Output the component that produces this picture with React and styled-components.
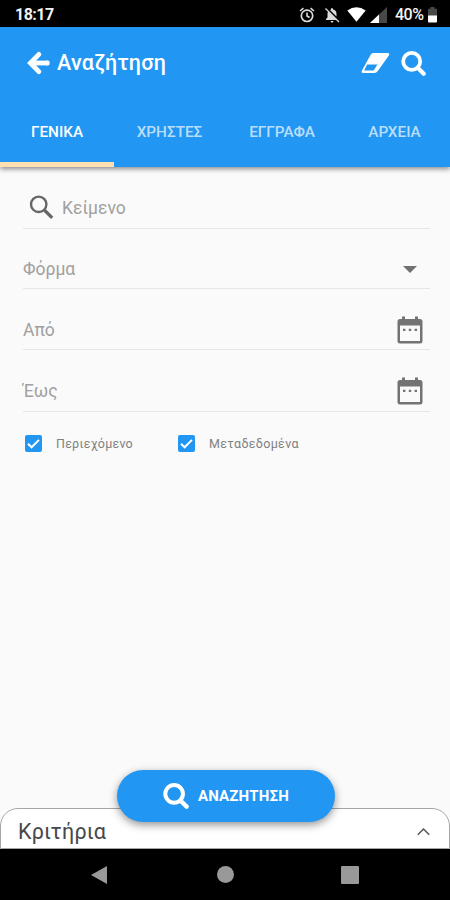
import React, { useState } from 'react';
import styled, { createGlobalStyle } from 'styled-components';

const GlobalStyle = createGlobalStyle`
    body {
        margin: 0;
        background: #fafafa;
        font-family: Roboto, 'Noto Sans', sans-serif;
        overflow: hidden;
    }

    * {
        box-sizing: border-box;
    }

    svg {
        display: block;
        flex: none;
    }
`;

const Screen = styled.div`
    width: 450px;
    height: 900px;
    display: flex;
    flex-direction: column;
    background: #fafafa;
    overflow: hidden;
`;

const StatusBar = styled.div`
    height: 27px;
    flex: none;
    padding: 2px 13px 0 15px;
    display: flex;
    align-items: center;
    justify-content: space-between;
    background: black;
    color: #f2f2f2;
    font-size: 16px;
    font-weight: 500;
`;

const StatusIcons = styled.div`
    display: flex;
    align-items: center;
`;

const StatusIcon = styled.svg`
    margin-right: ${(props) => props.$gap || 0}px;
`;

const Clock = styled.span`
    font-weight: 700;
    letter-spacing: -0.5px;
`;

const Battery = styled.span`
    width: 28px;
    margin-right: 5px;
    white-space: nowrap;
    letter-spacing: -0.5px;
`;

const Header = styled.header`
    height: 140px;
    flex: none;
    display: flex;
    flex-direction: column;
    background: #2196f3;
    color: white;
    box-shadow: 0 2px 5px rgba(0, 0, 0, 0.45);
`;

const Toolbar = styled.div`
    height: 72px;
    padding: 0 24px 0 26px;
    display: flex;
    align-items: center;
`;

const Title = styled.h1`
    flex: 1;
    margin: 0 0 0 7px;
    font-size: 21.5px;
    font-weight: 500;
    line-height: 30px;
    letter-spacing: 0.25px;
`;

const Actions = styled.div`
    display: flex;
    align-items: center;
    gap: 11px;
`;

const Tabs = styled.nav`
    flex: 1;
    display: grid;
    grid-template-columns: 114px 111px 114px 111px;
`;

const Tab = styled.button`
    padding: 2px 0 0;
    border: 0;
    border-bottom: 5px solid ${(props) => (props.$active ? '#ffe0b2' : 'transparent')};
    background: none;
    color: ${(props) => (props.$active ? 'white' : 'rgba(255, 255, 255, 0.7)')};
    font-family: inherit;
    font-size: 15.3px;
    font-weight: 500;
`;

const Form = styled.main`
    flex: 1;
    padding: 0 20px 0 23px;
`;

const Field = styled.label`
    height: ${(props) => props.$height}px;
    padding: ${(props) => props.$top}px 7px 0 0;
    display: flex;
    align-items: center;
    border-bottom: 1.5px solid #e6e6e6;
`;

const SearchIcon = styled.svg`
    margin: 0 8px 0 6px;
`;

const Placeholder = styled.span`
    flex: 1;
    color: #a0a0a0;
    font-size: 17.5px;
    line-height: 24px;
`;

const DropdownIcon = styled.svg`
    margin-right: 6px;
`;

const Options = styled.div`
    margin-top: 23px;
    padding-left: 2px;
    display: flex;
`;

const Option = styled.label`
    width: 153px;
    display: flex;
    align-items: center;
    color: #808080;
    font-size: 12.5px;
    line-height: 17px;
    letter-spacing: ${(props) => props.$spacing}px;
    white-space: nowrap;
`;

const Check = styled.span`
    width: 17px;
    height: 17px;
    margin-right: 14px;
    border-radius: 2px;
    background: ${(props) => (props.$checked ? '#2196f3' : '#bbb')};
`;

const Sheet = styled.section`
    position: relative;
    height: 41px;
    flex: none;
    padding: 6px 19px 0 17px;
    display: flex;
    align-items: center;
    justify-content: space-between;
    border: 1px solid #a6a6a6;
    border-width: 1.5px 1px 1px;
    border-radius: 18px 18px 0 0;
    background: white;
`;

const SheetTitle = styled.h2`
    margin: 0;
    color: #484848;
    font-size: 21.5px;
    font-weight: 400;
    line-height: 28px;
    letter-spacing: 0.2px;
`;

const SearchButton = styled.button`
    position: absolute;
    top: -39px;
    left: 116px;
    width: 218px;
    height: 52px;
    padding: 0 0 0 46px;
    display: flex;
    align-items: center;
    gap: 9px;
    border: 0;
    border-radius: 26px;
    background: #2196f3;
    color: white;
    font-family: inherit;
    font-size: 15px;
    font-weight: 700;
    letter-spacing: 0.15px;
    box-shadow: 0 3px 8px rgba(0, 0, 0, 0.42);
`;

const NavBar = styled.footer`
    height: 51px;
    flex: none;
    padding: 0 91px;
    display: flex;
    align-items: center;
    justify-content: space-between;
    background: black;
`;

const HomeIcon = styled.svg`
    margin-left: 2px;
`;

const BoldSearch = ({ size = 25 }) => (
    <svg width={size} height={size} viewBox="0 0 25 25" fill="none" stroke="white">
        <circle cx="10.7" cy="10.4" r="8.5" strokeWidth="3.8" />
        <path d="M17 17L22.7 22.7" strokeWidth="4.2" strokeLinecap="round" />
    </svg>
);

const BackArrow = () => (
    <svg width="24" height="24" viewBox="0 0 24 24" fill="none" stroke="white" strokeWidth="4.8">
        <path d="M12.9 3.4L4.4 12L12.9 20.6" strokeLinecap="round" />
        <path d="M5.4 12H21.8" />
        <path d="M21 11.2H22V12.8H21Z" strokeWidth="3.2" strokeLinejoin="round" />
    </svg>
);

const Eraser = () => (
    <svg width="29" height="22" viewBox="0 0 29 22">
        <path
            fill="white"
            fillRule="evenodd"
            d="M12.2 1H26.6Q29 1 28 3.2L16.6 19.3Q15.4 21 13.4 21H2.2Q-.2 21 1 18.5L9.8 2.6Q10.6 1 12.2 1ZM6.2 12.5L3.1 18.6H12.6L16.5 12.5Z"
        />
    </svg>
);

const Calendar = () => (
    <svg width="26" height="28" viewBox="0 0 26 28" fill="#737373">
        <path
            fillRule="evenodd"
            d="M5 .5H8V3H18V.5H21V3H23Q25.5 3 25.5 5.5V25Q25.5 27.5 23 27.5H3Q.5 27.5 .5 25V5.5Q.5 3 3 3H5ZM3 9.5V25H23V9.5Z"
        />
        <path d="M6 12.7H8.4V15H6ZM11.8 12.7H14.2V15H11.8ZM17.6 12.7H20V15H17.6Z" />
    </svg>
);

const TABS = ['ΓΕΝΙΚΑ', 'ΧΡΗΣΤΕΣ', 'ΕΓΓΡΑΦΑ', 'ΑΡΧΕΙΑ'];

const OPTIONS = [
    { label: 'Περιεχόμενο', spacing: 0.22 },
    { label: 'Μεταδεδομένα', spacing: 0.32 },
];

const App = () => {
    const [tab, setTab] = useState(0);

    return (
        <Screen>
            <GlobalStyle />
            <StatusBar>
                <Clock>18:17</Clock>
                <StatusIcons>
                    <StatusIcon $gap={9} width="16" height="16" viewBox="0 0 16 16" fill="none" stroke="#ddd">
                        <circle cx="8" cy="8.8" r="5.7" strokeWidth="1.7" />
                        <path d="M8 5.4V9L10.6 10.5M1 4L4.4 1.2M15 4L11.6 1.2" strokeWidth="1.6" />
                    </StatusIcon>
                    <StatusIcon $gap={7} width="16" height="16" viewBox="0 0 16 16">
                        <path
                            fill="#ddd"
                            d="M4.2 4.6L12.6 13H2V12L3.5 10.5V7Q3.5 5.5 4.2 4.6ZM6 3L7 2.6V1.8Q8 .4 9 1.8V2.6Q12.5 3.4 12.5 7V9.6ZM6.5 14H9.5Q9.3 15.6 8 15.6T6.5 14Z"
                        />
                        <path d="M1.5 1.5L15 15" stroke="#ddd" strokeWidth="1.3" />
                    </StatusIcon>
                    <StatusIcon $gap={4} width="19" height="15" viewBox="0 0 19 15">
                        <path fill="white" d="M.3 3.4Q9.5-3 18.7 3.4L9.5 14.8Z" />
                    </StatusIcon>
                    <StatusIcon $gap={8} width="17" height="16" viewBox="0 0 17 16">
                        <path fill="#484848" d="M17 0V16H0Z" />
                        <path fill="white" d="M9 7.5V16H0Z" />
                    </StatusIcon>
                    <Battery>40%</Battery>
                    <StatusIcon width="9" height="16" viewBox="0 0 9 16">
                        <path fill="#484848" d="M2.5 0H6.5V1.8H9V9H0V1.8H2.5Z" />
                        <path fill="white" d="M0 8.5H9V14.5Q9 15.5 8 15.5H1Q0 15.5 0 14.5Z" />
                    </StatusIcon>
                </StatusIcons>
            </StatusBar>

            <Header>
                <Toolbar>
                    <BackArrow />
                    <Title>Αναζήτηση</Title>
                    <Actions>
                        <Eraser />
                        <BoldSearch />
                    </Actions>
                </Toolbar>
                <Tabs>
                    {TABS.map((label, index) => (
                        <Tab key={label} $active={index === tab} onClick={() => setTab(index)}>
                            {label}
                        </Tab>
                    ))}
                </Tabs>
            </Header>

            <Form>
                <Field $height={62} $top={20}>
                    <SearchIcon width="25" height="25" viewBox="0 0 25 25" fill="none" stroke="#666">
                        <circle cx="9.7" cy="9.3" r="7.7" strokeWidth="2.4" />
                        <path d="M15.3 15L23.2 22.9" strokeWidth="3.2" />
                    </SearchIcon>
                    <Placeholder>Κείμενο</Placeholder>
                </Field>
                <Field $height={60} $top={21}>
                    <Placeholder>Φόρμα</Placeholder>
                    <DropdownIcon width="14" height="7" viewBox="0 0 14 7">
                        <path fill="#707070" d="M0 0H14L7 7Z" />
                    </DropdownIcon>
                </Field>
                <Field $height={61} $top={21}>
                    <Placeholder>Από</Placeholder>
                    <Calendar />
                </Field>
                <Field $height={62} $top={21}>
                    <Placeholder>Έως</Placeholder>
                    <Calendar />
                </Field>
                <Options>
                    {OPTIONS.map((item) => (
                        <Option key={item.label} $spacing={item.spacing}>
                            <Check $checked>
                                <svg width="17" height="17" viewBox="0 0 17 17" fill="none" stroke="white">
                                    <path d="M3 8.8L6.6 12.3L14 4.9" strokeWidth="2" />
                                </svg>
                            </Check>
                            {item.label}
                        </Option>
                    ))}
                </Options>
            </Form>

            <Sheet>
                <SheetTitle>Κριτήρια</SheetTitle>
                <svg width="13" height="9" viewBox="0 0 13 9" fill="none" stroke="#555">
                    <path d="M.8 7.8L6.5 2L12.2 7.8" strokeWidth="1.5" />
                </svg>
                <SearchButton>
                    <BoldSearch size={26} />
                    ΑΝΑΖΗΤΗΣΗ
                </SearchButton>
            </Sheet>

            <NavBar>
                <svg width="17" height="18" viewBox="0 0 17 18">
                    <path fill="#999" d="M16 0V18L0 9Z" />
                </svg>
                <HomeIcon width="17" height="17" viewBox="0 0 17 17">
                    <circle cx="8.5" cy="8.5" r="8.5" fill="#999" />
                </HomeIcon>
                <svg width="18" height="18" viewBox="0 0 18 18">
                    <rect width="18" height="18" rx="1" fill="#999" />
                </svg>
            </NavBar>
        </Screen>
    );
};

export default App;
